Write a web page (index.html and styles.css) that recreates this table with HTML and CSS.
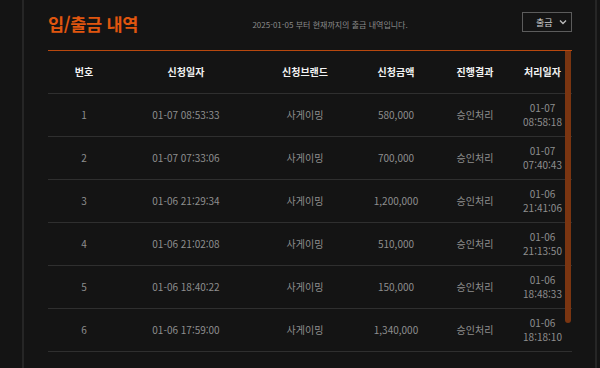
FILE: index.html
```html
<!DOCTYPE html>
<html lang="ko">
<head>
<meta charset="utf-8">
<title>입/출금 내역</title>
<link rel="stylesheet" href="styles.css">
</head>
<body>
<div class="panel">
  <div class="top">
    <h1 class="title">입/출금 내역</h1>
    <p class="subtitle">2025-01-05 부터 현재까지의 출금 내역입니다.</p>
    <div class="select">
      <span>출금</span>
      <svg class="chev" width="8" height="6" viewBox="0 0 8 6"><path d="M1 1.5 L4 4.5 L7 1.5" fill="none" stroke="#bbb" stroke-width="1.4"/></svg>
    </div>
  </div>
  <div class="table-wrap">
    <table class="list">
      <colgroup>
        <col class="c1"><col class="c2"><col class="c3"><col class="c4"><col class="c5"><col class="c6">
      </colgroup>
      <thead>
        <tr><th>번호</th><th>신청일자</th><th>신청브랜드</th><th>신청금액</th><th>진행결과</th><th>처리일자</th></tr>
      </thead>
      <tbody>
        <tr><td>1</td><td>01-07 08:53:33</td><td>사게이밍</td><td>580,000</td><td>승인처리</td><td>01-07 08:58:18</td></tr>
        <tr><td>2</td><td>01-07 07:33:06</td><td>사게이밍</td><td>700,000</td><td>승인처리</td><td>01-07 07:40:43</td></tr>
        <tr><td>3</td><td>01-06 21:29:34</td><td>사게이밍</td><td>1,200,000</td><td>승인처리</td><td>01-06 21:41:06</td></tr>
        <tr><td>4</td><td>01-06 21:02:08</td><td>사게이밍</td><td>510,000</td><td>승인처리</td><td>01-06 21:13:50</td></tr>
        <tr><td>5</td><td>01-06 18:40:22</td><td>사게이밍</td><td>150,000</td><td>승인처리</td><td>01-06 18:48:33</td></tr>
        <tr><td>6</td><td>01-06 17:59:00</td><td>사게이밍</td><td>1,340,000</td><td>승인처리</td><td>01-06 18:18:10</td></tr>
      </tbody>
    </table>
    <div class="thumb"></div>
  </div>
</div>
</body>
</html>
```
FILE: styles.css
```css
html, body {
  margin: 0;
  padding: 0;
  height: 368px;
  overflow: hidden;
  background: #141414;
}
body {
  font-family: "Noto Sans CJK KR", "Noto Sans", sans-serif;
  color: #8e8e8e;
}
.panel {
  margin-left: 22px;
  width: 524px;
  min-height: 368px;
  padding: 0 23px 0 24px;
  border-left: 2px solid #262626;
  border-right: 2px solid #262626;
}
.top {
  display: flex;
  align-items: center;
  height: 48px;
  margin-bottom: 2px;
}
.title {
  margin: 0;
  font-size: 17.5px;
  font-weight: 700;
  letter-spacing: -0.3px;
  color: #e0560f;
  line-height: 1;
}
.subtitle {
  flex: 1;
  margin: 0;
  text-align: center;
  font-size: 8px;
  color: #8a8a8a;
}
.select {
  box-sizing: border-box;
  width: 50px;
  height: 20px;
  margin-top: -4px;
  border: 1px solid #5c5c5c;
  display: flex;
  align-items: center;
  justify-content: space-between;
  padding: 0 4px 0 13px;
  font-size: 9px;
  color: #cfcfcf;
}
.chev {
  display: block;
}
.table-wrap {
  position: relative;
  border-top: 1px solid #b8480e;
}
.list {
  width: 524px;
  table-layout: fixed;
  border-collapse: collapse;
}
.c1 { width: 72px; }
.c2 { width: 132px; }
.c3 { width: 106px; }
.c4 { width: 76px; }
.c5 { width: 82px; }
.c6 { width: 56px; }
.list th, .list td {
  height: 42px;
  padding: 0 4px;
  text-align: center;
  border-bottom: 1px solid #2f2f2f;
  font-size: 10px;
  line-height: 14px;
}
.list th:last-child, .list td:last-child {
  padding: 0 7px 0 4px;
}
.list th {
  color: #f2f2f2;
  font-weight: 700;
}
.list td {
  color: #8e8e8e;
}
.thumb {
  position: absolute;
  top: 0;
  right: 1px;
  width: 6px;
  height: 272px;
  background: #7a3511;
  border-radius: 0 0 3px 3px;
}
```
